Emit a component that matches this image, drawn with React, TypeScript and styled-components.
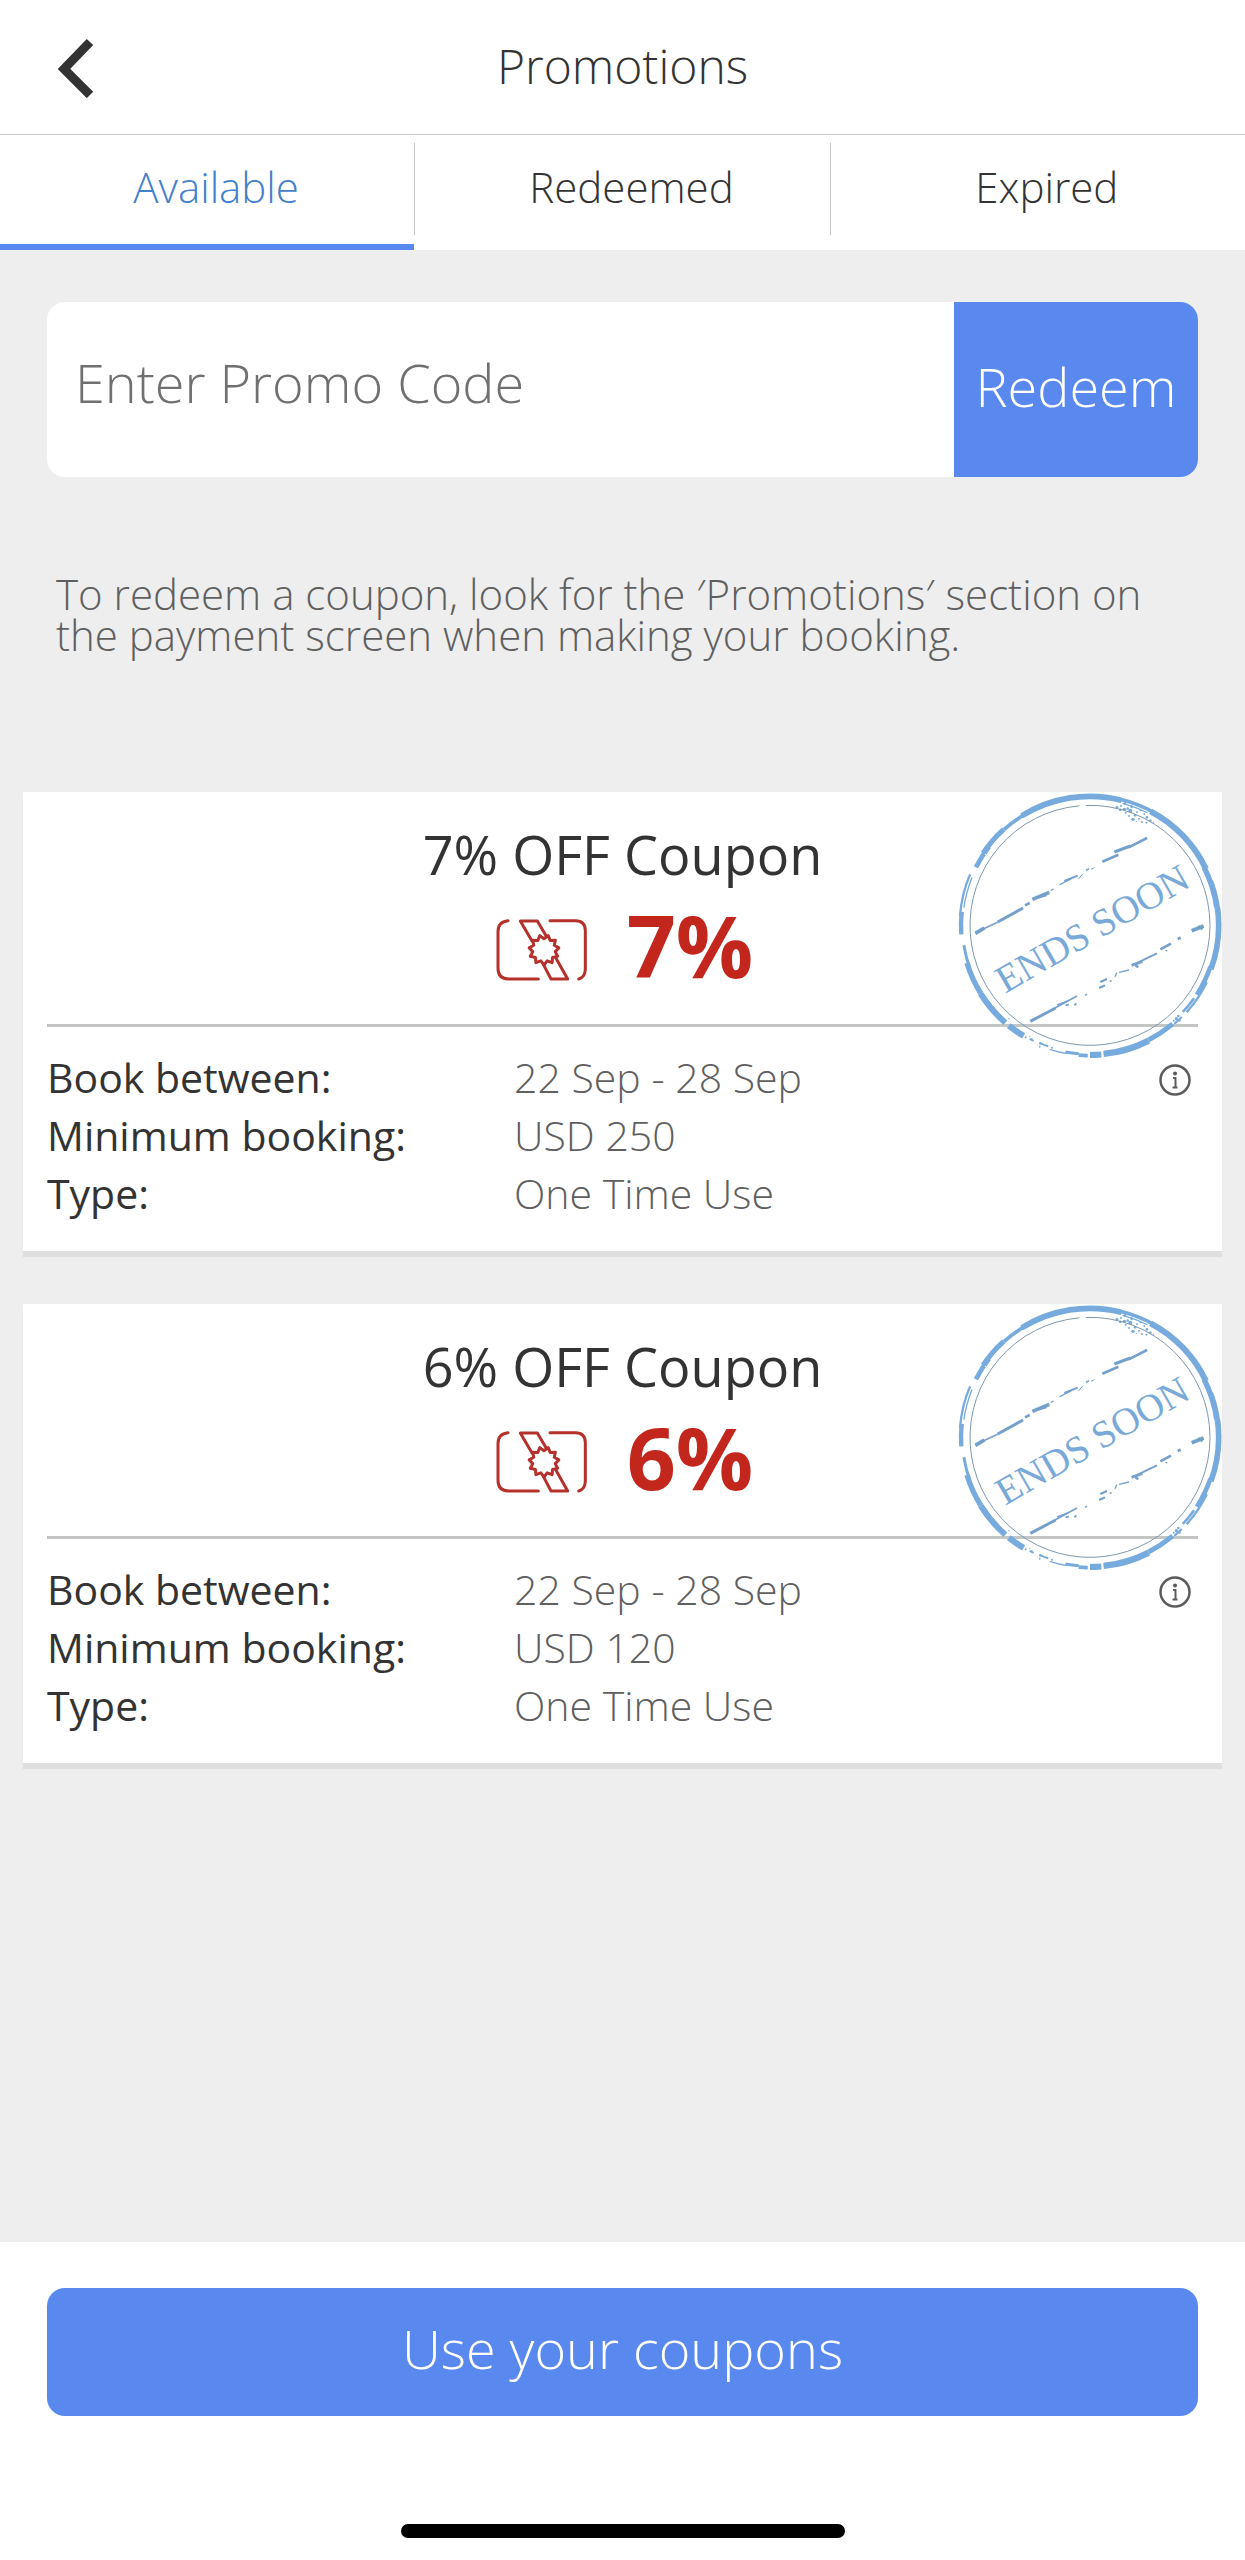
import React from "react";
import styled, { createGlobalStyle, css } from "styled-components";

const color = {
  ink: "#333333",
  muted: "#5f5f5f",
  placeholder: "#707070",
  blue: "#5989ee",
  link: "#4380cb",
  red: "#c3261c",
  iconRed: "#b5312b",
  stamp: "#78abdd",
  stampDark: "#7f98ab",
  line: "#c4c6c6",
  page: "#eeeeee",
};

const size = { body: 41, hint: 42, title: 48, large: 54, percent: 86 };

const GlobalStyle = createGlobalStyle`
  *, *::before, *::after { box-sizing: border-box; }
  body {
    margin: 0;
    background: ${color.page};
    color: ${color.ink};
    font-family: "Open Sans", "Noto Sans", sans-serif;
    font-weight: 400;
  }
  button, input { font: inherit; color: inherit; border: 0; margin: 0; padding: 0; background: none; }
  button { cursor: pointer; }
`;

const Screen = styled.div`
  display: flex;
  flex-direction: column;
  min-height: 100vh;
`;

const Header = styled.header`
  display: grid;
  grid-template-columns: 1fr auto 1fr;
  align-items: center;
  padding: 34px 54px 36px;
  background: #fff;
  border-bottom: 1px solid ${color.line};
`;

const BackButton = styled.button`
  display: flex;
  justify-self: start;
  padding-top: 3px;
`;

const Title = styled.h1`
  margin: 0;
  font-size: ${size.title}px;
  line-height: 64px;
  font-weight: 300;
`;

const Tabs = styled.nav`
  display: flex;
  background: #fff;
`;

const Tab = styled.button<{ $active?: boolean }>`
  flex: 1 1 0;
  padding: 24px 0 30px 18px;
  border-bottom: 6px solid ${(p) => (p.$active ? color.blue : "transparent")};
  color: ${(p) => (p.$active ? color.link : color.ink)};
  font-size: ${size.hint}px;
  line-height: 55px;
  font-weight: 300;
`;

const TabDivider = styled.span`
  width: 1px;
  margin: 8px 0 15px;
  background: ${color.line};
`;

const Main = styled.main`
  flex: 1;
  padding: 52px 23px;
`;

const PromoForm = styled.form`
  display: flex;
  height: 175px;
  margin: 0 24px;
  border-radius: 18px;
  overflow: hidden;
  background: #fff;
`;

const PromoInput = styled.input`
  flex: 1;
  min-width: 0;
  padding: 0 28px 16px;
  font-size: ${size.large}px;
  font-weight: 300;
  outline: none;
  &::placeholder { color: ${color.placeholder}; opacity: 1; }
`;

const solidButton = css`
  background: ${color.blue};
  color: #fff;
  font-size: ${size.large}px;
  font-weight: 300;
`;

const RedeemButton = styled.button`
  ${solidButton}
  flex: none;
  width: 244px;
  padding-bottom: 8px;
`;

const Hint = styled.p`
  margin: 96px 60px 137px 33px;
  color: ${color.muted};
  font-size: ${size.hint}px;
  line-height: 41px;
  font-weight: 300;
`;

const CouponList = styled.ul`
  display: flex;
  flex-direction: column;
  gap: 53px;
  margin: 0;
  padding: 0;
  list-style: none;
`;

const Card = styled.li`
  position: relative;
  padding: 32px 24px 37px;
  background: #fff;
  box-shadow: 0 6px 1px #dfdfdf;
`;

const CardTitle = styled.h2`
  margin: 0;
  text-align: center;
  font-size: ${size.large}px;
  line-height: 60px;
  font-weight: 400;
`;

const Discount = styled.div`
  display: flex;
  justify-content: center;
  align-items: center;
  gap: 40px;
  padding: 16px 0 34px 4px;
  border-bottom: 3px solid ${color.line};
`;

const TicketBox = styled.span`
  display: flex;
  padding-top: 10px;
`;

const Percent = styled.strong`
  color: ${color.red};
  font-size: ${size.percent}px;
  line-height: 90px;
  font-weight: 700;
`;

const DetailArea = styled.div`
  display: flex;
  align-items: flex-start;
  padding: 30px 7px 0 0;
`;

const Details = styled.dl`
  flex: 1;
  display: flex;
  flex-direction: column;
  gap: 17px;
  margin: 0;
`;

const DetailRow = styled.div`
  display: grid;
  grid-template-columns: minmax(0, 467px) 1fr;
  font-size: ${size.body}px;
  line-height: 41px;
`;

const Label = styled.dt`
  font-weight: 400;
`;

const Value = styled.dd`
  margin: 0;
  color: ${color.muted};
  font-weight: 300;
`;

const InfoButton = styled.button`
  display: flex;
  padding-top: 7px;
`;

const StampArt = styled.svg`
  position: absolute;
  top: 0;
  right: 0;
  width: 267px;
  height: 267px;
`;

const Footer = styled.footer`
  display: flex;
  flex-direction: column;
  align-items: center;
  gap: 108px;
  padding: 46px 47px 22px;
  background: #fff;
`;

const UseButton = styled.button`
  ${solidButton}
  width: 100%;
  height: 128px;
  padding-bottom: 8px;
  border-radius: 18px;
`;

const HomeBar = styled.div`
  width: 444px;
  max-width: 60%;
  height: 14px;
  border-radius: 7px;
  background: #000;
`;

function arc(from: number, to: number, r: number, cx = 449, cy = 436) {
  const point = (deg: number) => {
    const a = (deg * Math.PI) / 180;
    return `${(cx + r * Math.cos(a)).toFixed(1)} ${(cy + r * Math.sin(a)).toFixed(1)}`;
  };
  return `M${point(from)}A${r} ${r} 0 ${to - from > 180 ? 1 : 0} 1 ${point(to)}`;
}

// [start angle, end angle, radius, stroke width]
const rim: [number, number, number, number][] = [
  [207, 218, 384, 14], [214, 228, 387, 15], [228, 243, 386, 11], [238, 284, 387, 17],
  [283, 300, 389, 11], [285, 297, 379, 4], [298, 334, 387, 18], [333, 352, 384, 16], [340, 360, 390, 7],
  [352, 380, 386, 17], [379, 393, 382, 14], [386, 402, 390, 7], [395, 403, 381, 8],
  [176, 186, 387, 13], [184, 203, 391, 7], [188, 202, 382, 4],
  [160, 171, 383, 9], [148, 163, 386, 16], [131, 148, 387, 18],
  [121, 129, 387, 18], [116, 118, 386, 6], [109, 113, 384, 6], [100, 108, 391, 4], [95, 101, 387, 9],
  [91, 95, 391, 11], [85, 90, 389, 18], [63, 84, 388, 19], [50, 63, 386, 15], [45, 49, 389, 7],
];

// [x1, y1, x2, y2, stroke width]
const strokes: [number, number, number, number, number][] = [
  [105, 460, 132, 444, 11], [130, 446, 172, 427, 5], [172, 426, 248, 384, 9], [254, 376, 268, 369, 8],
  [276, 358, 327, 337, 11], [294, 352, 318, 345, 8], [332, 331, 340, 327, 4], [358, 314, 392, 297, 4],
  [372, 303, 412, 287, 6], [414, 297, 428, 281, 3], [437, 271, 446, 266, 5], [452, 268, 462, 263, 3],
  [486, 245, 534, 224, 8], [522, 216, 570, 198, 9], [565, 202, 620, 174, 8],
  [270, 724, 346, 684, 9], [344, 684, 410, 648, 5], [350, 675, 384, 662, 5], [376, 676, 386, 673, 5],
  [402, 676, 408, 670, 5], [434, 646, 440, 642, 4], [476, 624, 494, 616, 6], [480, 606, 500, 597, 7],
  [508, 605, 514, 602, 4], [524, 590, 529, 578, 4], [536, 577, 566, 570, 4], [574, 556, 606, 544, 9],
  [585, 556, 594, 562, 7], [600, 544, 650, 520, 6], [660, 508, 692, 491, 8], [676, 512, 681, 512, 4],
  [712, 477, 721, 473, 9], [754, 452, 790, 438, 11], [774, 438, 786, 448, 8],
];

const specks: [number, number, number][] = [
  [530, 82, 4], [542, 78, 3], [540, 90, 4], [552, 88, 5], [556, 98, 3], [562, 86, 4], [570, 92, 6], [574, 80, 4],
  [566, 108, 3], [578, 118, 5], [584, 106, 4], [590, 96, 3], [596, 116, 3], [604, 126, 3], [612, 102, 3],
  [620, 112, 4], [630, 122, 4], [618, 128, 3], [600, 90, 3], [588, 124, 2], [640, 126, 2], [526, 60, 4],
  [540, 64, 4], [554, 70, 4], [700, 722, 3], [708, 716, 5], [714, 708, 4], [718, 722, 3], [704, 730, 3],
  [256, 772, 3], [268, 770, 2], [275, 776, 2], [300, 790, 4], [298, 800, 3], [335, 803, 3], [206, 716, 2],
];

function EndsSoonStamp({ id }: { id: string }) {
  return (
    <StampArt viewBox="44 36 801 801" role="img" aria-label="Ends soon">
      <defs>
        <filter id={id} x="-5%" y="-5%" width="110%" height="110%">
          <feTurbulence type="fractalNoise" baseFrequency="0.35" numOctaves="2" seed="4" result="noise" />
          <feDisplacementMap in="SourceGraphic" in2="noise" scale="4" />
        </filter>
      </defs>
      <g filter={`url(#${id})`} fill="none" stroke={color.stamp}>
        {rim.map(([a, b, r, w], i) => (
          <path key={i} d={arc(a, b, r)} strokeWidth={w} />
        ))}
        {strokes.map(([x1, y1, x2, y2, w], i) => (
          <path key={i} d={`M${x1} ${y1}L${x2} ${y2}`} strokeWidth={w} stroke="#74a0cc" />
        ))}
        {specks.map(([x, y, r], i) => (
          <circle key={i} cx={x} cy={y} r={r} fill={color.stamp} stroke="none" />
        ))}
      </g>
      <path d={arc(268, 360, 360)} fill="none" stroke={color.stampDark} strokeWidth="3" />
      <path d={arc(0, 265, 360)} fill="none" stroke={color.stampDark} strokeWidth="3" />
      <text
        transform="translate(195 641) rotate(-30)"
        fontFamily='"Liberation Serif", serif'
        fontSize="116"
        fill="#78a9d8"
      >
        ENDS SOON
      </text>
    </StampArt>
  );
}

const burst = Array.from({ length: 22 }, (_, i) => {
  const r = i % 2 ? 34 : 45;
  const a = ((i + 1) * Math.PI) / 11;
  return `${(432 + r * Math.sin(a)).toFixed(1)},${(451 - r * Math.cos(a)).toFixed(1)}`;
}).join(" ");

function TicketIcon() {
  return (
    <svg
      width="91"
      height="62"
      viewBox="288 358 273 186"
      fill="none"
      stroke={color.iconRed}
      strokeWidth="9"
      strokeLinecap="round"
      strokeLinejoin="round"
      aria-hidden="true"
    >
      <path d="M324 363Q294 366 294 396V506Q294 538 326 538H415" />
      <path d="M450 363H526Q556 363 556 393V508Q556 532 536 538" />
      <path d="M396 424L361 364H412L439 410" />
      <path d="M430 494L453 538H503L468 476" />
      <polygon points={burst} />
    </svg>
  );
}

function InfoIcon() {
  return (
    <svg width="32" height="32" viewBox="0 0 32 32" fill="none" stroke="#5c5c5c" aria-hidden="true">
      <circle cx="16" cy="16" r="14.5" strokeWidth="2.5" />
      <circle cx="16" cy="9.5" r="2" fill="#5c5c5c" stroke="none" />
      <path d="M14 14H16.5V23M13.5 23.5H18.5" strokeWidth="2" />
    </svg>
  );
}

const coupons = [
  { percent: "7%", dates: "22 Sep - 28 Sep", minimum: "USD 250", type: "One Time Use" },
  { percent: "6%", dates: "22 Sep - 28 Sep", minimum: "USD 120", type: "One Time Use" },
];

export default function App() {
  return (
    <Screen>
      <GlobalStyle />
      <Header>
        <BackButton type="button" aria-label="Back">
          <svg width="43" height="60" viewBox="0 0 43 60" fill="none" stroke={color.ink} strokeWidth="9">
            <path d="M36 4L10 31L36 57" />
          </svg>
        </BackButton>
        <Title>Promotions</Title>
      </Header>
      <Tabs aria-label="Promotion status">
        <Tab type="button" $active aria-current="page">Available</Tab>
        <TabDivider />
        <Tab type="button">Redeemed</Tab>
        <TabDivider />
        <Tab type="button">Expired</Tab>
      </Tabs>
      <Main>
        <PromoForm onSubmit={(e) => e.preventDefault()}>
          <PromoInput type="text" placeholder="Enter Promo Code" aria-label="Enter Promo Code" />
          <RedeemButton type="submit">Redeem</RedeemButton>
        </PromoForm>
        <Hint>
          To redeem a coupon, look for the ′Promotions′ section on the payment screen when making your booking.
        </Hint>
        <CouponList>
          {coupons.map((c) => (
            <Card key={c.percent}>
              <CardTitle>{c.percent} OFF Coupon</CardTitle>
              <Discount>
                <TicketBox><TicketIcon /></TicketBox>
                <Percent>{c.percent}</Percent>
              </Discount>
              <DetailArea>
                <Details>
                  <DetailRow><Label>Book between:</Label><Value>{c.dates}</Value></DetailRow>
                  <DetailRow><Label>Minimum booking:</Label><Value>{c.minimum}</Value></DetailRow>
                  <DetailRow><Label>Type:</Label><Value>{c.type}</Value></DetailRow>
                </Details>
                <InfoButton type="button" aria-label="Coupon details"><InfoIcon /></InfoButton>
              </DetailArea>
              <EndsSoonStamp id={`ink-${parseInt(c.percent, 10)}`} />
            </Card>
          ))}
        </CouponList>
      </Main>
      <Footer>
        <UseButton type="button">Use your coupons</UseButton>
        <HomeBar />
      </Footer>
    </Screen>
  );
}
